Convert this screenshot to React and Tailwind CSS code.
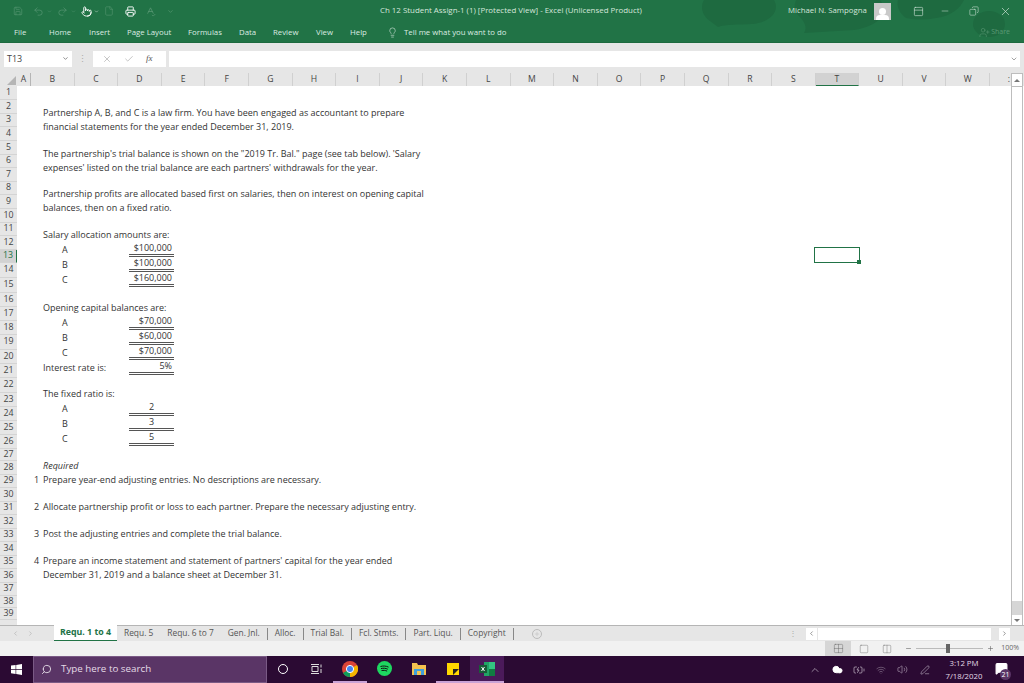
import React from 'react';
import {
  BatteryCharging, Check, ChevronDown, ChevronLeft, ChevronRight, ChevronUp, Cloud, Columns2, Copy, File, Grid2x2, Lightbulb,
  MessageSquare, Minus, PanelTop, PenLine, Plus, Pointer, Printer, Redo2, Save, Search, Square, SpellCheck, Undo2, UserPlus, Volume2, Wifi, X,
} from 'lucide-react';

const COLS = ['B', 'C', 'D', 'E', 'F', 'G', 'H', 'I', 'J', 'K', 'L', 'M', 'N', 'O', 'P', 'Q', 'R', 'S', 'T', 'U', 'V', 'W'];
const MENU = [['File', 14], ['Home', 49], ['Insert', 89], ['Page Layout', 127], ['Formulas', 188], ['Data', 239], ['Review', 273], ['View', 316], ['Help', 350]];
const ROW_HEIGHTS = [14, 14, 13, 14, 14, 13, 14, 13, 14, 14, 13, 14, 13, 15, 15, 14, 14, 14, 15, 14, 14, 15, 14, 14, 14, 14, 12, 14, 13, 14, 13, 14, 13, 14, 13, 14, 13, 12, 12];
const TABS = [['Requ. 5', false], ['Requ. 6 to 7', false], ['Gen. Jnl.', true], ['Alloc.', true], ['Trial Bal.', true], ['Fcl. Stmts.', true], ['Part. Liqu.', true], ['Copyright', true]];

const Line = ({ h = 14, children, className = '' }) => (
  <div style={{ height: h }} className={`flex items-center whitespace-nowrap ${className}`}>{children}</div>
);

const Amount = ({ h = 15, label, value, right = true }) => (
  <div style={{ height: h }} className="flex items-center whitespace-nowrap">
    <span className="w-[86px] pl-[19px]">{label}</span>
    <span className={`w-[45px] h-full flex items-center border-b-[3px] border-double border-[#555] ${right ? 'justify-end pr-[2px]' : 'justify-center'}`}>{value}</span>
  </div>
);

const Note = ({ h = 14, num, children }) => (
  <div style={{ height: h }} className="flex items-center whitespace-nowrap -ml-[9px]">
    <span className="w-[9px]">{num}</span>
    <span>{children}</span>
  </div>
);

const TaskButton = ({ w, active, children }) => (
  <div style={{ width: w }} className={`h-full flex items-center justify-center border-b-2 ${active ? 'border-[#c9a3d6]' : 'border-transparent'}`}>
    {children}
  </div>
);

const Tray = ({ w, children }) => (
  <div style={{ width: w }} className="flex items-center justify-center">{children}</div>
);

export default function App() {
  return (
    <div className="w-[1024px] h-[683px] overflow-hidden flex flex-col bg-white text-[#333] font-['Open_Sans',sans-serif] text-[9px]">
      <div className="relative h-[43px] shrink-0 bg-[#217346] border-b border-[#1d6a3f] overflow-hidden">
        {/* speech bubble pattern behind the title */}
        <svg className="absolute right-0 top-0" width="340" height="43" viewBox="0 0 340 43" fill="#1e6a40">
          <path d="M20 0h70c6 10-2 22-22 24-14 1-26 0-34 3l-8-6c-8-6-10-14-6-21z" />
          <path d="M112 0h84c10 12 0 26-26 30l-50 3c4-6 0-12-6-18-4-5-4-10-2-15z" />
          <path d="M214 0h66c-4 8-12 16-28 18-10 2-20 2-30 0-6-4-10-12-8-18z" />
          <ellipse cx="305" cy="24" rx="16" ry="13" />
        </svg>
        <div className="relative flex h-[22px] items-center text-[#d5e6db]">
          <div className="w-[373px] flex items-center text-[#5f9c79]">
            <Save size={10} strokeWidth={1.3} className="ml-[13px]" />
            <Undo2 size={11} strokeWidth={1.3} className="ml-[10px]" />
            <ChevronDown size={5} className="ml-[3px]" />
            <Redo2 size={11} strokeWidth={1.3} className="ml-[5px]" />
            <ChevronDown size={5} className="ml-[3px]" />
            <Pointer size={11} strokeWidth={2} className="ml-[5px] text-white" />
            <ChevronDown size={5} className="ml-[2px] text-white" />
            <File size={10} strokeWidth={1.2} className="ml-[5px]" />
            <Printer size={11} strokeWidth={2} className="ml-[11px] text-white" />
            <SpellCheck size={11} strokeWidth={1.5} className="ml-[9px]" />
            <ChevronDown size={7} className="ml-[11px]" />
          </div>
          <div className="w-[415px] pl-[7px] text-[7.9px] whitespace-nowrap">Ch 12 Student Assign-1 (1) [Protected View] - Excel (Unlicensed Product)</div>
          <span className="w-[86px] text-[7.8px] whitespace-nowrap">Michael N. Sampogna</span>
          <span className="w-[17px] h-[17px] bg-[#c9c9c9] flex flex-col items-center justify-end overflow-hidden">
            <span className="w-[7px] h-[7px] rounded-full bg-white" />
            <span className="w-[13px] h-[5px] rounded-t bg-white" />
          </span>
          <PanelTop size={11} strokeWidth={1.3} className="ml-[22px]" />
          <Minus size={10} strokeWidth={1.2} className="ml-[16px]" />
          <Copy size={10} strokeWidth={1.3} className="ml-[19px] -scale-x-100" />
          <X size={13} strokeWidth={1.2} className="ml-[20px]" />
        </div>

        <div className="relative flex items-center h-[21px] text-[#dcebe2] text-[7.8px]">
          {MENU.map(([name, x], i) => (
            <span key={name} style={{ width: (i < MENU.length - 1 ? MENU[i + 1][1] : 387) - x, marginLeft: i === 0 ? x : 0 }}>{name}</span>
          ))}
          <Lightbulb size={11} strokeWidth={1.3} className="mr-[6px]" />
          <span className="whitespace-nowrap">Tell me what you want to do</span>
          <span className="ml-auto mr-[14px] flex items-center gap-[1px] text-[#5c9a76] whitespace-nowrap text-[7px]">
            <UserPlus size={11} strokeWidth={1.2} />
            Share
          </span>
        </div>
      </div>

      {/* formula bar */}
      <div className="h-[30px] shrink-0 bg-[#e6e6e6] flex items-center pt-[1px] pl-[4px] pr-[4px]">
        <div className="w-[68px] h-[16px] bg-white flex items-center justify-between px-[3px] text-[#444]">
          <span>T13</span>
          <ChevronDown size={7} />
        </div>
        <span className="w-[21px] text-center text-[#aaa] leading-none">&#8942;</span>
        <div className="w-[73px] h-[16px] bg-white flex items-center gap-[12px] pl-[9px] text-[#bbb]">
          <X size={10} />
          <Check size={10} />
          <span className="italic font-['Liberation_Serif',serif] text-[9px] text-[#555]">fx</span>
        </div>
        <div className="flex-1 h-[16px] ml-[3px] bg-white flex items-center justify-end pr-[2px] text-[#777]">
          <ChevronDown size={8} />
        </div>
      </div>

      {/* column headers */}
      <div className="h-[13px] shrink-0 flex bg-[#e6e6e6] text-[8.6px] text-[#444]">
        <div className="w-[17px] shrink-0 relative overflow-hidden">
          <span className="absolute right-[1px] bottom-[1px] w-0 h-0 border-l-[9px] border-l-transparent border-b-[9px] border-b-[#b5b5b5]" />
        </div>
        <div className="w-[14px] shrink-0 flex items-center justify-center border-r border-[#b5b5b5]">A</div>
        {COLS.map(c => (
          <div key={c} className={`w-[43.6px] shrink-0 flex items-center justify-center border-r border-[#d0d0d0] ${c === 'T' ? 'bg-[#d2d2d2] border-b border-b-[#217346]' : ''}`}>{c}</div>
        ))}
        <div className="flex-1 min-w-0 flex justify-end overflow-hidden pr-[1px]">
          <span className="mr-[1px]">:</span>
          <span className="w-[12px] h-[13px] bg-white border-x border-t border-[#bdbdbd] flex items-center justify-center">
            <span className="w-0 h-0 border-x-[3px] border-x-transparent border-b-[3px] border-b-[#777]" />
          </span>
        </div>
      </div>

      {/* sheet */}
      <div className="relative h-[539px] shrink-0 flex overflow-hidden">
        <div className="w-[17px] shrink-0 bg-[#e6e6e6] text-[8.8px] text-[#444]">
          {ROW_HEIGHTS.map((h, i) => (
            <div key={i} style={{ height: h }} className={`flex items-center justify-center border-b border-[#d4d4d4] ${i === 12 ? 'bg-[#d2d2d2] border-r border-r-[#217346] text-[#217346]' : ''}`}>{i + 1}</div>
          ))}
        </div>
        <div className="flex-1 pl-[26px] pt-[20px]">
          <Line>Partnership A, B, and C is a law firm. You have been engaged as accountant to prepare</Line>
          <Line>financial statements for the year ended December 31, 2019.</Line>
          <Line h={13} />
          <Line>The partnership's trial balance is shown on the "2019 Tr. Bal." page (see tab below). 'Salary</Line>
          <Line>expenses' listed on the trial balance are each partners' withdrawals for the year.</Line>
          <Line h={12} />
          <Line>Partnership profits are allocated based first on salaries, then on interest on opening capital</Line>
          <Line>balances, then on a fixed ratio.</Line>
          <Line h={13} />
          <Line>Salary allocation amounts are:</Line>
          <Amount h={15} label="A" value="$100,000" />
          <Amount h={15} label="B" value="$100,000" />
          <Amount h={15} label="C" value="$160,000" />
          <Line h={13} />
          <Line h={15}>Opening capital balances are:</Line>
          <Amount h={15} label="A" value="$70,000" />
          <Amount h={15} label="B" value="$60,000" />
          <Amount h={15} label="C" value="$70,000" />
          <div className="h-[15px] flex items-center whitespace-nowrap">
            <span className="w-[86px]">Interest rate is:</span>
            <span className="w-[45px] h-full flex items-center justify-end pr-[2px] border-b-[3px] border-double border-[#555]">5%</span>
          </div>
          <Line h={12} />
          <Line>The fixed ratio is:</Line>
          <Amount h={15} label="A" value="2" right={false} />
          <Amount h={15} label="B" value="3" right={false} />
          <Amount h={15} label="C" value="5" right={false} />
          <Line h={13} />
          <Line className="italic">Required</Line>
          <Note num="1">Prepare year-end adjusting entries. No descriptions are necessary.</Note>
          <Line h={13} />
          <Note num="2">Allocate partnership profit or loss to each partner. Prepare the necessary adjusting entry.</Note>
          <Line h={13} />
          <Note num="3">Post the adjusting entries and complete the trial balance.</Note>
          <Line h={13} />
          <Note num="4">Prepare an income statement and statement of partners' capital for the year ended</Note>
          <Note>December 31, 2019 and a balance sheet at December 31.</Note>
        </div>
        {/* selected cell */}
        <div className="absolute left-[814px] top-[161px] w-[46px] h-[16px] border border-[#217346]">
          <span className="absolute -right-[2px] -bottom-[2px] w-[4px] h-[4px] bg-[#217346]" />
        </div>
        {/* vertical scrollbar */}
        <div className="w-[12px] mr-[1px] shrink-0 flex flex-col border-x border-[#bdbdbd]">
          <div className="flex-1 bg-white border-t border-[#bdbdbd]" />
          <div className="h-[14px] bg-[#d6d6d6]" />
          <div className="h-[10px] bg-white flex items-center justify-center">
            <span className="w-0 h-0 border-x-[3px] border-x-transparent border-t-[3px] border-t-[#777]" />
          </div>
        </div>
      </div>

      {/* sheet tabs */}
      <div className="h-[16px] shrink-0 bg-[#e6e6e6] border-t border-[#b5b5b5] flex items-center text-[8.4px] text-[#555]">
        <div className="w-[54px] pl-[12px] flex gap-[8px] text-[#aaa]">
          <ChevronLeft size={7} />
          <ChevronRight size={7} />
        </div>
        <div className="w-[63px] h-[16px] -mt-[1px] bg-white border-b border-[#217346] flex items-center justify-center font-bold text-[#217346] text-[8.8px] whitespace-nowrap">Requ. 1 to 4</div>
        {TABS.map(([t, sep]) => (
          <div key={t} className={`h-[12px] px-[7px] flex items-center whitespace-nowrap ${sep ? 'border-r border-[#888]' : ''}`}>{t}</div>
        ))}
        <span className="ml-[18px] w-[10px] h-[10px] rounded-full border border-[#bbb] flex items-center justify-center text-[#bbb]"><Plus size={6} /></span>
        <div className="ml-auto flex items-center h-full">
          <span className="text-[#aaa] mr-[9px]">&#8942;</span>
          <span className="w-[11px] h-[12px] bg-white flex items-center justify-center"><ChevronLeft size={7} /></span>
          <span className="w-[173px] h-[12px] ml-[1px] bg-white" />
          <span className="w-[11px] h-[12px] ml-[8px] mr-[14px] bg-white flex items-center justify-center"><ChevronRight size={7} /></span>
        </div>
      </div>

      {/* status bar */}
      <div className="h-[15px] shrink-0 bg-[#f1f1f1] flex items-center justify-end text-[7px] text-[#666]">
        <span className="w-[26px] h-full bg-[#d6d6d6] flex items-center justify-center"><Grid2x2 size={11} strokeWidth={1} /></span>
        <span className="w-[26px] flex justify-center"><Square size={10} strokeWidth={1} /></span>
        <span className="w-[20px] flex justify-center"><Columns2 size={10} strokeWidth={1} /></span>
        <Minus size={7} className="ml-[8px]" />
        <span className="relative w-[67px] h-[1px] mx-[4px] bg-[#bbb]">
          <span className="absolute left-[30px] -top-[4px] w-[4px] h-[9px] bg-[#666]" />
        </span>
        <Plus size={7} />
        <span className="ml-[7px] mr-[5px]">100%</span>
      </div>

      {/* taskbar */}
      <div className="flex-1 bg-[#2b0a33] flex items-center text-white">
        <div className="w-[33px] flex justify-center">
          <svg width="11" height="11" viewBox="0 0 11 11" fill="#fff"><path d="M0 1.600 4.600 1v4.100H0zM5.200.9 11 0v5.100H5.200zM0 5.700h4.600v4.200L0 9.300zM5.200 5.700H11V11l-5.800-.9z" /></svg>
        </div>
        <div className="w-[234px] h-full bg-[#5a3566] border border-[#7a5a85] flex items-center pl-[7px] gap-[9px] text-[#e4dbe6] text-[9.8px]">
          <Search size={11} className="-scale-x-100" />
          <span>Type here to search</span>
        </div>
        <TaskButton w={32}><span className="w-[10px] h-[10px] rounded-full border-[1.5px] border-white" /></TaskButton>
        <TaskButton w={34}>
          <svg width="11" height="10" viewBox="0 0 11 10" fill="none" stroke="#ddd"><path d="M0 .5h8M0 9.500h8M1 2.500h6v5H1zM10 .5v3M10 5v4" /></svg>
        </TaskButton>
        <TaskButton w={34} active>
          <svg width="16" height="16" viewBox="0 0 16 16">
            <circle cx="8" cy="8" r="8" fill="#db4437" />
            <path d="M8 8 1 12a8 8 0 0 0 7 4z" fill="#0f9d58" />
            <path d="M8 8v8a8 8 0 0 0 7-12z" fill="#f4b400" />
            <circle cx="8" cy="8" r="3.600" fill="#4285f4" stroke="#fff" />
          </svg>
        </TaskButton>
        <TaskButton w={34}>
          <svg width="15" height="15" viewBox="0 0 15 15">
            <circle cx="7.500" cy="7.500" r="7.500" fill="#1ed760" />
            <path d="M3.500 5.500c2.700-.8 5.400-.6 8 .6M4 7.600c2.300-.6 4.600-.5 6.800.6M4.500 9.600c2-.4 3.800-.3 5.600.5" stroke="#111" strokeWidth="1" fill="none" />
          </svg>
        </TaskButton>
        <TaskButton w={35}>
          <svg width="14" height="12" viewBox="0 0 14 12">
            <path d="M0 0h5l1 2h8v10H0z" fill="#f3c24f" />
            <path d="M2 6h10v6H2z" fill="#3f9fdc" />
            <path d="M5 8h4v4H5z" fill="#f3c24f" />
          </svg>
        </TaskButton>
        <TaskButton w={34} active>
          <svg width="12" height="12" viewBox="0 0 12 12">
            <path d="M0 0h12v12H0z" fill="#ffd800" />
            <path d="M6 12l6-6H6z" fill="#222" />
          </svg>
        </TaskButton>
        <div className="w-[34px] h-full bg-[#4b1a5a] border-b-2 border-[#c9a3d6] flex items-center justify-center">
          <svg width="16" height="14" viewBox="0 0 16 14">
            <path d="M5 0h11v14H5z" fill="#21a366" />
            <path d="M10 0h6v7h-6z" fill="#33c481" />
            <path d="M10 7h6v7h-6z" fill="#107c41" />
            <path d="M0 3h8v8H0z" fill="#185c37" />
            <path d="M2.500 5l3 4M5.500 5l-3 4" stroke="#fff" strokeWidth="1" />
          </svg>
        </div>
        <div className="ml-auto mr-[11px] flex items-center text-[#cfc6d2]">
          <Tray w={22}><ChevronUp size={12} strokeWidth={1.3} /></Tray>
          <Tray w={22}><Cloud size={11} fill="#fff" className="text-white" /></Tray>
          <Tray w={21}><BatteryCharging size={12} strokeWidth={1.3} /></Tray>
          <Tray w={24}><Wifi size={10} strokeWidth={1.3} className="text-[#9a8a9f]" /></Tray>
          <Tray w={18}><Volume2 size={11} strokeWidth={1.3} className="text-[#b9aabd]" /></Tray>
          <Tray w={28}><PenLine size={10} strokeWidth={1.3} /></Tray>
          <div className="w-[50px] flex flex-col items-center text-[7.8px] leading-[13px] text-[#e4dbe6]">
            <span>3:12 PM</span>
            <span>7/18/2020</span>
          </div>
          <div className="relative w-[24px] flex justify-center -mt-[3px]">
            <MessageSquare size={13} fill="#fff" className="text-white" />
            <span className="absolute right-[2px] -bottom-[5px] w-[11px] h-[11px] rounded-full bg-[#5a3566] text-white text-[7px] leading-[11px] text-center">21</span>
          </div>
        </div>
      </div>
    </div>
  );
}
